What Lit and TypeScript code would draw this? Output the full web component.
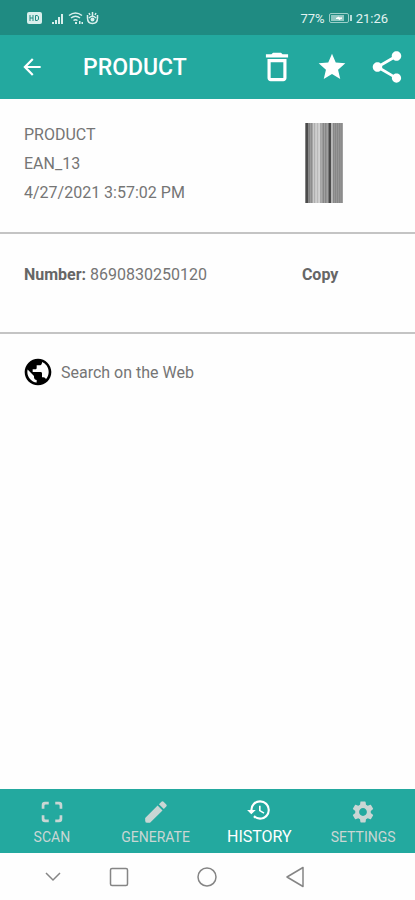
import { LitElement, html, css, svg } from "lit";
import { customElement } from "lit/decorators.js";
import { classMap } from "lit/directives/class-map.js";

const paths = {
  back: "M20 11H7.83l5.59-5.59L12 4l-8 8 8 8 1.41-1.41L7.83 13H20v-2z",
  trash:
    "M6 19c0 1.100.9 2 2 2h8c1.100 0 2-.9 2-2V7H6v12zM8 9h8v10H8V9zm7.500-5l-1-1h-5l-1 1H5v2h14V4h-3.500z",
  star: "M12 17.270L18.180 21l-1.640-7.030L22 9.240l-7.190-.61L12 2 9.190 8.630 2 9.240l5.460 4.730L5.820 21z",
  share:
    "M18 16.080c-.76 0-1.440.3-1.960.77L8.910 12.700c.05-.23.09-.46.09-.7s-.04-.47-.09-.7l7.050-4.110c.54.5 1.250.81 2.040.81 1.660 0 3-1.340 3-3s-1.340-3-3-3-3 1.340-3 3c0 .24.04.47.09.7L8.040 9.810C7.500 9.310 6.790 9 6 9c-1.660 0-3 1.340-3 3s1.340 3 3 3c.79 0 1.500-.31 2.040-.81l7.120 4.160c-.05.21-.08.43-.08.65 0 1.610 1.310 2.920 2.920 2.920s2.920-1.310 2.920-2.920-1.310-2.920-2.920-2.920z",
  globe:
    "M12 2C6.480 2 2 6.480 2 12s4.480 10 10 10 10-4.480 10-10S17.520 2 12 2zm-1 17.930c-3.950-.49-7-3.850-7-7.930 0-.62.08-1.210.21-1.790L9 15v1c0 1.100.9 2 2 2v1.930zm6.900-2.540c-.26-.81-1-1.390-1.900-1.390h-1v-3c0-.55-.45-1-1-1H8v-2h2c.55 0 1-.45 1-1V7h2c1.100 0 2-.9 2-2v-.41c2.930 1.190 5 4.060 5 7.410 0 2.080-.8 3.970-2.100 5.390z",
  scan: "M2.500 9V5.500a3 3 0 0 1 3-3H9V5H6.200a1.200 1.200 0 0 0-1.200 1.200V9zM15 2.500h3.500a3 3 0 0 1 3 3V9H19V6.200A1.200 1.200 0 0 0 17.800 5H15zM21.500 15v3.500a3 3 0 0 1-3 3H15V19h2.800a1.200 1.200 0 0 0 1.200-1.200V15zM9 21.500H5.500a3 3 0 0 1-3-3V15H5v2.800A1.200 1.200 0 0 0 6.200 19H9z",
  pencil:
    "M2 17.500V20q0 2 2 2h2.500L18 10.500 13.500 6 2 17.500zM21.500 7a1.500 1.500 0 0 0 0-2L19 2.500a1.500 1.500 0 0 0-2 0L14.700 4.800l4.500 4.500L21.500 7z",
  history:
    "M13 3a9 9 0 0 0-9 9H1l3.890 3.890.07.14L9 12H6c0-3.870 3.130-7 7-7s7 3.130 7 7-3.130 7-7 7c-1.930 0-3.680-.79-4.940-2.060l-1.420 1.420A8.954 8.954 0 0 0 13 21a9 9 0 0 0 0-18zm-1 5v5l4.280 2.540.72-1.210-3.500-2.080V8H12z",
  gear: "M19.140 12.940c.04-.3.06-.61.06-.94 0-.32-.02-.64-.07-.94l2.030-1.580a.49.49 0 0 0 .12-.61l-1.920-3.320a.488.488 0 0 0-.59-.22l-2.390.96c-.5-.38-1.030-.7-1.620-.94l-.36-2.540a.484.484 0 0 0-.48-.41h-3.840c-.24 0-.43.17-.47.41l-.36 2.540c-.59.24-1.130.57-1.620.94l-2.390-.96c-.22-.08-.47 0-.59.22L2.740 8.870c-.12.21-.08.47.12.61l2.030 1.580c-.05.3-.09.63-.09.94s.02.64.07.94l-2.030 1.580a.49.49 0 0 0-.12.61l1.920 3.320c.12.22.37.29.59.22l2.390-.96c.5.38 1.030.7 1.620.94l.36 2.540c.05.24.24.41.48.41h3.840c.24 0 .44-.17.47-.41l.36-2.540c.59-.24 1.130-.56 1.620-.94l2.390.96c.22.08.47 0 .59-.22l1.920-3.320c.12-.22.07-.47-.12-.61l-2.010-1.580zM12 15.600c-1.980 0-3.600-1.620-3.600-3.600s1.620-3.600 3.600-3.600 3.600 1.620 3.600 3.600-1.620 3.600-3.600 3.600z",
};

const icon = (name: keyof typeof paths, size: string) =>
  html`<svg class="icon ${size}" viewBox="0 0 24 24" aria-hidden="true"><path d=${paths[name]} /></svg>`;

/* Grey level of each one-unit stripe of the barcode, left to right. */
const stripes = [
  130, 75, 75, 135, 130, 155, 140, 165, 200, 175, 200, 205, 185, 205, 210, 165, 170, 155, 135,
  160, 135, 150, 160, 120, 70, 75, 180, 180, 135, 150, 135, 150, 135, 150, 135, 145, 140, 160,
];

const tabs = [
  { label: "SCAN", icon: "scan" },
  { label: "GENERATE", icon: "pencil" },
  { label: "HISTORY", icon: "history", active: true },
  { label: "SETTINGS", icon: "gear" },
] as const;

@customElement("app-root")
export class AppRoot extends LitElement {
  static styles = css`
    :host {
      display: flex;
      flex-direction: column;
      min-height: 100vh;
      background: #fefefe;
      color: #757575;
      font: 16px/29px Roboto, sans-serif;
    }
    button, a {
      border: 0;
      padding: 0;
      background: none;
      color: inherit;
      font: inherit;
      text-decoration: none;
      cursor: pointer;
    }
    p, h1, h2 { margin: 0; font-size: inherit; font-weight: inherit; }
    .icon { display: block; fill: currentColor; flex: none; }
    .s26 { width: 26px; height: 26px; }
    .s32 { width: 32px; height: 32px; }
    .s38 { width: 38px; height: 38px; }
    .status {
      display: flex;
      align-items: center;
      justify-content: space-between;
      box-sizing: border-box;
      height: 35px;
      padding: 1px 27px 0;
      background: #1f8b82;
      color: #e2f3f1;
      font-size: 13px;
    }
    .cluster { display: flex; align-items: center; gap: 4px; }
    .signals { width: 74px; height: 14px; }
    .battery { width: 23px; height: 12px; }
    .toolbar {
      display: flex;
      align-items: center;
      height: 64px;
      padding: 0 1px 0 19px;
      background: #23a99f;
      color: #fff;
    }
    .title {
      flex: 1;
      padding-left: 38px;
      font-size: 23px;
      font-weight: 500;
    }
    .action {
      display: flex;
      justify-content: center;
      width: 55px;
    }
    .block {
      display: grid;
      grid-template-columns: 67fr 33fr;
      padding: 0 24px;
      border-bottom: 2px solid #c4c4c4;
    }
    .summary { padding-top: 21px; padding-bottom: 25px; align-items: start; }
    .number { padding-top: 26px; padding-bottom: 43px; }
    .barcode { width: 38px; height: 80px; margin: 3px 0 0 35px; }
    .strong { font-weight: 700; color: #666; }
    .copy { justify-self: start; margin-left: 32px; }
    .search {
      display: flex;
      align-items: center;
      gap: 7px;
      align-self: flex-start;
      padding: 22px 22px;
    }
    .globe { color: #000; }
    .tabs {
      display: grid;
      grid-template-columns: repeat(4, 1fr);
      height: 64px;
      margin-top: auto;
      background: #23a99f;
      color: #c9d6d4;
      font-size: 14px;
      line-height: 20px;
    }
    .tab {
      display: flex;
      flex-direction: column;
      align-items: center;
      padding-top: 10px;
      gap: 2px;
    }
    .active { padding-top: 8px; gap: 4px; color: #fff; font-size: 16px; }
    .system {
      display: grid;
      grid-template-columns: 30fr 45fr 88fr 88fr 88fr 76fr;
      height: 47px;
    }
    .key { display: grid; place-items: center; }
    .first { grid-column: 2; }
    .line { fill: none; stroke: #858585; stroke-width: 1.5; }
  `;

  key(label: string, shape: unknown, first = false) {
    return html`<button class=${classMap({ key: true, first })} aria-label=${label}>
      <svg class="icon s26 line" viewBox="0 0 26 26">${shape}</svg>
    </button>`;
  }

  render() {
    return html`
      <div class="status">
        <svg class="signals" viewBox="0 0 74 14" fill="#d9efec" aria-hidden="true">
          <rect x="0" y="1" width="15" height="12" rx="2" />
          <path d="M3 4v6M6 4v6M3 7h3M8.500 4.500v5h1.500l1.500-1v-3l-1.500-1z" stroke="#1f8b82" fill="none" />
          <path d="M25 11h2v2h-2zM28 9h2v4h-2zM31 6h2v7h-2zM34 3h2v10h-2z" />
          <g fill="none" stroke="#d9efec" stroke-width="1.500">
            <path d="M42 4.500q6.500-5 13 0M44 7q4.500-3.500 9 0M46.500 9.500q2-1.500 4 0" />
            <path d="M60.500 4v3q0 5.500 5 5.500t5-5.500V4M62 7q3.500-3.500 7 0M65.500 1v4M62 2l1 2M69 2l-1 2" />
          </g>
          <circle cx="65.500" cy="8.500" r="2" />
          <path d="M48 11h2v2h-2zM52 10h1.500v3H52zM54.500 11H56v2h-1.500z" />
        </svg>
        <div class="cluster">
          <span>77%</span>
          <svg class="battery" viewBox="0 0 23 12" aria-hidden="true">
            <rect x=".5" y="1.500" width="19" height="9" rx="1.500" fill="none" stroke="#9ccfc9" />
            <rect x="2" y="3" width="13" height="6" fill="#8fc8c2" />
            <path d="M7 6.500l3-1.500v1h3L10 7.500v-1z" fill="#fff" stroke="#fff" />
            <rect x="21" y="3" width="2" height="6" fill="#b9deda" />
          </svg>
          <span>21:26</span>
        </div>
      </div>
      <header class="toolbar">
        <button aria-label="Back">${icon("back", "s26")}</button>
        <h1 class="title">PRODUCT</h1>
        <button class="action" aria-label="Delete">${icon("trash", "s38")}</button>
        <button class="action" aria-label="Favourite">${icon("star", "s32")}</button>
        <button class="action" aria-label="Share">${icon("share", "s38")}</button>
      </header>
      <section class="block summary">
        <div>
          <h2>PRODUCT</h2>
          <p>EAN_13</p>
          <p>4/27/2021 3:57:02 PM</p>
        </div>
        <svg class="barcode" viewBox="0 0 38 80" role="img" aria-label="Barcode">
          ${stripes.map((v, i) => svg`<rect x=${i} width="1" height="80" fill="rgb(${v},${v},${v})" />`)}
        </svg>
      </section>
      <section class="block number">
        <p><b class="strong">Number:</b> 8690830250120</p>
        <button class="copy strong">Copy</button>
      </section>
      <a class="search" href="#search"><span class="globe">${icon("globe", "s32")}</span>Search on the Web</a>
      <nav class="tabs">
        ${tabs.map(
          (t) => html`<a class=${classMap({ tab: true, active: "active" in t })} href="#${t.label.toLowerCase()}"
            >${icon(t.icon, "s26")}<span>${t.label}</span></a
          >`,
        )}
      </nav>
      <div class="system">
        ${this.key("Hide", svg`<path d="M6 9l7 7 7-7" />`, true)}
        ${this.key("Recents", svg`<rect x="4.500" y="4.500" width="17" height="17" rx="1.500" />`)}
        ${this.key("Home", svg`<circle cx="13" cy="13" r="9" />`)}
        ${this.key("Back", svg`<path d="M5 13l16-9.500v19z" stroke-linejoin="round" />`)}
      </div>
    `;
  }
}
